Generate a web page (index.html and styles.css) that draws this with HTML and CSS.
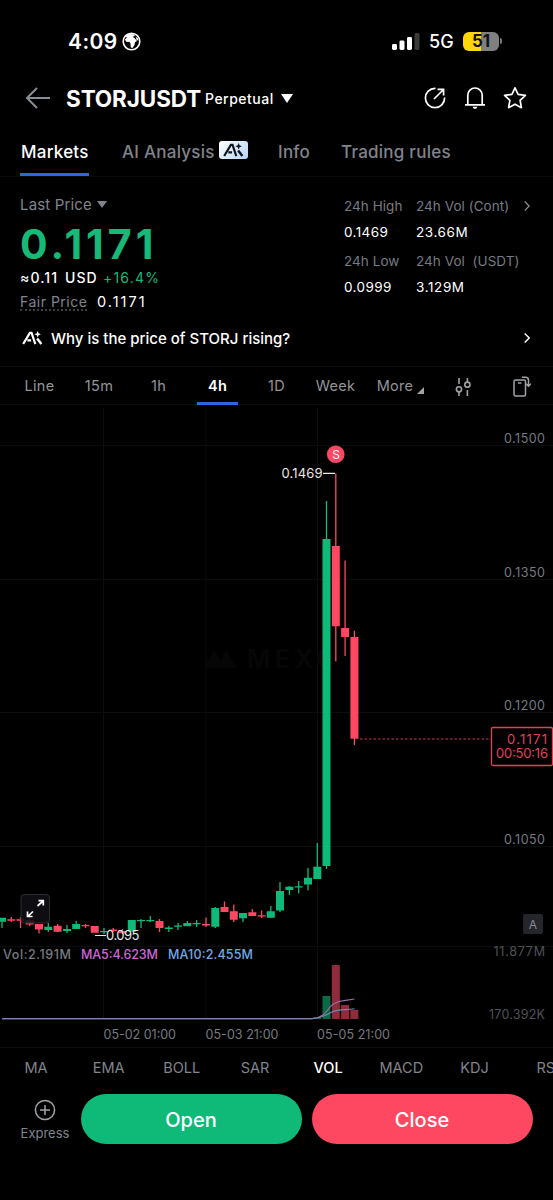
FILE: index.html
```html
<!DOCTYPE html>
<html lang="en">
<head>
    <meta charset="UTF-8">
    <meta name="viewport" content="width=device-width, initial-scale=1.0">
    <title>STORJUSDT Perpetual</title>
    <link rel="stylesheet" href="styles.css">
</head>
<body>
    <svg width="0" height="0" class="defs">
        <symbol id="ai" viewBox="0 0 22 15">
            <path d="M1 14L8.2 2H10L14 14M5.5 10H9.5" fill="none" stroke="currentColor" stroke-width="2.3"/>
            <path d="M16 8L20.5 14" fill="none" stroke="currentColor" stroke-width="2.6"/>
            <path d="M16.5 0L17.5 2.5L20 3.5L17.5 4.5L16.5 7L15.5 4.5L13 3.5L15.5 2.5Z" fill="currentColor"/>
        </symbol>
    </svg>

    <!-- Phone status bar -->
    <div class="status">
        <span class="time">4:09</span>
        <svg class="globe" width="19" height="19" viewBox="0 0 19 19">
            <circle cx="9.5" cy="9.5" r="8.3" fill="none" stroke="#fff" stroke-width="1.6"/>
            <path d="M3 4.5L7 2L12 2.2L13 4L10.5 4.8L12.5 6L15 9L13 10.2L12.5 13L10.5 16L8.8 15.5L8.5 11.5L7.5 10L4.2 9.8L2.8 7.5L5 5.5Z" fill="#fff"/>
            <path d="M13.5 4.5L16 6.5L16.5 9L14.5 7.5Z" fill="#fff"/>
        </svg>
        <svg class="signal" width="28" height="17" viewBox="0 0 28 17">
            <rect x="0" y="11" width="5" height="6" rx="1.4" fill="#fff"/>
            <rect x="7.5" y="7.5" width="5" height="9.5" rx="1.4" fill="#fff"/>
            <rect x="15" y="4" width="5" height="13" rx="1.4" fill="#fff"/>
            <rect x="22.5" y="0" width="5" height="17" rx="1.4" fill="#3a3a3a"/>
        </svg>
        <span class="network">5G</span>
        <div class="battery">51</div>
        <div class="battery-tip"></div>
    </div>

    <div class="header">
        <svg class="back" width="26" height="22" viewBox="0 0 26 22">
            <path d="M12 1L2 11L12 21M2 11H25" fill="none" stroke="#898d96" stroke-width="2"/>
        </svg>
        <h1>STORJUSDT</h1>
        <span class="perp">Perpetual</span>
        <svg class="down" width="12" height="9" viewBox="0 0 12 9"><path d="M0 0H12L6 9Z" fill="#fff"/></svg>
        <div class="actions">
            <svg width="24" height="24" viewBox="0 0 24 24" fill="none" stroke="#fff" stroke-width="1.7">
                <path d="M12.5 2.4H12A9.6 9.6 0 1 0 21.6 12V11.5"/>
                <path d="M11 13L20 4M14.5 3.4H20.6V9.5"/>
            </svg>
            <svg width="24" height="24" viewBox="0 0 24 24" fill="none" stroke="#fff" stroke-width="1.7">
                <path d="M4.8 18.5V9.2A7.2 7.2 0 0 1 19.2 9.2V18.5M2 18.8H22"/>
                <path d="M9.5 20.8H14.5L13.2 22.7H10.8Z" fill="#fff" stroke="none"/>
            </svg>
            <svg width="24" height="24" viewBox="0 0 24 24" fill="none" stroke="#fff" stroke-width="1.7" stroke-linejoin="round">
                <path d="M12 1.8L15.1 8.4L22.4 9.4L17.1 14.4L18.4 21.7L12 18.2L5.6 21.7L6.9 14.4L1.6 9.4L8.9 8.4Z"/>
            </svg>
        </div>
    </div>

    <div class="tabs">
        <span class="tab active">Markets</span>
        <span class="tab tab-ai">AI Analysis</span>
        <span class="ai-badge"><svg width="21" height="14"><use href="#ai"/></svg></span>
        <span class="tab tab-info">Info</span>
        <span class="tab tab-rules">Trading rules</span>
    </div>

    <div class="summary">
        <div class="price-box">
            <div class="last">Last Price <svg width="10" height="7" viewBox="0 0 10 7"><path d="M0 0H10L5 7Z" fill="#80848c"/></svg></div>
            <div class="price">0.1171</div>
            <div class="usd"><span class="approx">≈0.11 USD</span><span class="up">+16.4%</span></div>
            <div class="fair"><span class="fair-label">Fair Price</span><span class="fair-value">0.1171</span></div>
        </div>
        <div class="stats">
            <span class="label">24h High</span>
            <span class="label">24h Vol (Cont)</span>
            <svg width="6" height="10" viewBox="0 0 6 10"><path d="M.7 .5L5.2 5L.7 9.5" fill="none" stroke="#898d96" stroke-width="1.2"/></svg>
            <span>0.1469</span>
            <span class="vol">23.66M</span>
            <i></i>
            <span class="label">24h Low</span>
            <span class="label">24h Vol&nbsp; (USDT)</span>
            <i></i>
            <span>0.0999</span>
            <span class="vol">3.129M</span>
        </div>
    </div>

    <div class="why">
        <svg width="21" height="14"><use href="#ai"/></svg>
        <span>Why is the price of STORJ rising?</span>
        <svg class="arrow" width="6" height="10" viewBox="0 0 6 10"><path d="M.7 .5L5.2 5L.7 9.5" fill="none" stroke="#fff" stroke-width="1.4"/></svg>
    </div>

    <div class="frames">
        <span>Line</span>
        <span>15m</span>
        <span>1h</span>
        <span class="active">4h</span>
        <span>1D</span>
        <span>Week</span>
        <span class="more">More<svg width="7" height="7" viewBox="0 0 7 7"><path d="M7 0V7H0Z" fill="#a0a2a6"/></svg></span>
        <svg width="16" height="20" viewBox="0 0 16 20" fill="none" stroke="#a0a2a6" stroke-width="1.6">
            <circle cx="4" cy="12.3" r="2.6"/><path d="M4 1V7M4 15V19"/>
            <circle cx="12.4" cy="7.7" r="2.6"/><path d="M12.4 1V5M12.4 13V19"/>
        </svg>
        <svg width="18" height="21" viewBox="0 0 18 21" fill="none" stroke="#a0a2a6" stroke-width="1.5">
            <rect x="1" y="4" width="11.5" height="16" rx="1.5"/>
            <path d="M5 7H8.5M9 1.2H12.5Q15.5 1.2 15.5 4.2V10M13 7.8L15.5 10.3L18 7.8"/>
        </svg>
    </div>

    <!-- Candles and volume, one unit = one pixel of the screen -->
    <svg class="chart" width="553" height="642" viewBox="0 405 553 642">
        <path class="grid" d="M0 445.5H553M0 579.5H553M0 712.5H553M0 846.5H553M0 946.5H553M103.5 408V1019M206 408V1019M317.5 408V1019"/>

        <g class="watermark">
            <path d="M204 668L214 650L221 661L226 650L237 668Z"/>
            <text x="247" y="668" textLength="88">MEXC</text>
        </g>

        <!-- wicks -->
        <path class="wick green" d="M2 918V928M48.3 923V932M67 925V933M76.2 921V929M104 928V934M141 919V928M150.3 916V922M168.8 926V932M178 923V930M187.3 921V926M196.6 920V927M215.3 907V928M243 913V922M270.8 906V918M280 882V912M289.4 886V895M298.7 881V893.5M308 868V890.5M317.3 843V879M326.5 501V869"/>
        <path class="wick red" d="M11.3 917V922M20.5 917V928M29.7 919V926M39 924V933.5M57.6 924V932M85.5 924V928M94.7 926V932M113.2 928V932M122.5 929V934M159.5 919V932M206 917.5V927M224.5 901.5V912M233.8 904.5V922M252.3 909V916M261.6 910.5V918M335.8 473.5V661.5M345.1 560.5V656M354.4 630.7V745"/>
        <!-- bodies -->
        <path class="body green" d="M2 917.7V921.7M48.3 926.7V930M67 929V931M76.2 924V929M104 931V932.3M131.8 920V931.7M141 920V921.2M150.3 920V921.2M168.8 927.5V929M178 925.5V926.7M187.3 923V926.3M196.6 923V924.2M215.3 908V926.7M243 913V918.3M270.8 911.3V917.7M280 891V910.5M289.4 886.7V890M298.7 886.2V887.4M308 877.7V884.5M317.3 866.7V879M326.5 539V866"/>
        <path class="body red" d="M11.3 919.3V920.7M20.5 919.3V920.7M29.7 920.5V924.5M39 924V929.5M57.6 925.7V931.7M85.5 925V926.3M94.7 926V932.7M113.2 929.5V931M122.5 931V933.3M159.5 921V928M206 924V925.5M224.5 907V912M233.8 911.3V919.7M252.3 912.3V916M261.6 915.2V916.6M335.8 546V626.3M345.1 628V637M354.4 637V738.8"/>

        <!-- volume -->
        <path class="body vol-green" d="M317.3 1017.5V1019M326.5 996V1019"/>
        <path class="body vol-red" d="M335.8 965V1019M345.1 1005V1019M354.4 1010V1019"/>
        <path class="ma5" d="M2 1018.6H312C321 1018 325 1014 330 1007C336 1000 344 1001 354.5 999"/>
        <path class="ma10" d="M2 1018.6H312C324 1018 327 1014 333 1011.5C339 1009.5 346 1010 354.5 1008.7"/>

        <!-- current price -->
        <path class="price-line" d="M360 739H491"/>
        <rect class="price-tag" x="491.5" y="727.5" width="61" height="38" rx="1.5"/>
        <text class="tag-text" x="507" y="744" textLength="40">0.1171</text>
        <text class="tag-text" x="496" y="758.3" textLength="52">00:50:16</text>

        <g class="axis">
            <text x="504" y="443" textLength="41">0.1500</text>
            <text x="504" y="577" textLength="41">0.1350</text>
            <text x="504" y="710" textLength="41">0.1200</text>
            <text x="504" y="844" textLength="41">0.1050</text>
            <text x="103.5" y="1038.5" textLength="72.5">05-02 01:00</text>
            <text x="205.5" y="1038.5" textLength="73">05-03 21:00</text>
            <text x="317" y="1038.5" textLength="73">05-05 21:00</text>
            <text class="dim" x="493.5" y="956" textLength="51.5">11.877M</text>
            <text class="dim" x="489" y="1018.5" textLength="56">170.392K</text>
        </g>

        <circle cx="335.7" cy="454.3" r="8.8" fill="#fe4761"/>
        <text class="sell" x="336" y="458.5" text-anchor="middle">S</text>

        <text class="mark" x="281.5" y="478" textLength="41">0.1469</text>
        <path class="mark-line" d="M323 473.3H335M95 935.5H106"/>
        <text class="mark" x="106" y="940.3" textLength="33.5">0.095</text>

        <text class="legend" x="3" y="958.5" textLength="68" fill="#777a80">Vol:2.191M</text>
        <text class="legend" x="81" y="958.5" textLength="77" fill="#cf66d8">MA5:4.623M</text>
        <text class="legend" x="168" y="958.5" textLength="85" fill="#6fa8e8">MA10:2.455M</text>

        <rect x="21" y="894.5" width="28.5" height="28.5" rx="3.5" fill="#101115" fill-opacity=".85" stroke="#2b2c31"/>
        <path d="M37.5 906L43 901M38.5 900.7H43.3V905.5M33 911.5L27.7 916.5M27.5 911.5V916.5H32.5" fill="none" stroke="#fff" stroke-width="1.7"/>

        <rect x="523" y="914" width="20" height="20" rx="2" fill="#25262b"/>
        <text class="auto" x="533" y="928.8" text-anchor="middle">A</text>
    </svg>

    <div class="indicators">
        <span>MA</span>
        <span>EMA</span>
        <span>BOLL</span>
        <span>SAR</span>
        <span class="active">VOL</span>
        <span>MACD</span>
        <span>KDJ</span>
        <span>RSI</span>
    </div>

    <div class="footer">
        <div class="express">
            <svg width="22" height="22" viewBox="0 0 22 22" fill="none" stroke="#a0a2a6" stroke-width="1.5">
                <circle cx="11" cy="11" r="9.6"/><path d="M6 11H16M11 6V16"/>
            </svg>
            <span>Express</span>
        </div>
        <button class="btn open">Open</button>
        <button class="btn close">Close</button>
    </div>
</body>
</html>
```
FILE: styles.css
```css
* {
    box-sizing: border-box;
}
body {
    margin: 0;
    width: 553px;
    height: 1200px;
    overflow: hidden;
    background-color: #000;
    color: #fff;
    font-family: Inter, "Liberation Sans", sans-serif;
    font-size: 14px;
}
svg {
    display: block;
    flex-shrink: 0;
}
.defs {
    position: absolute;
}

/* Status bar */
.status {
    display: flex;
    align-items: center;
    height: 72px;
    padding: 10px 0 0 68px;
}
.time {
    width: 54px;
    font-size: 21px;
    font-weight: 600;
    letter-spacing: 0.4px;
}
.globe {
    margin-right: 251px;
}
.signal {
    margin-right: 9px;
}
.network {
    width: 34px;
    font-size: 18px;
    font-weight: 500;
}
.battery {
    width: 36px;
    height: 19px;
    border-radius: 6px;
    background: linear-gradient(to right, #ffd60a 51%, #808080 51%);
    color: #111;
    font-size: 17px;
    font-weight: 700;
    line-height: 19px;
    text-align: center;
}
.battery-tip {
    width: 2px;
    height: 6px;
    margin-left: 1px;
    border-radius: 0 2px 2px 0;
    background-color: #777;
}

/* Header */
.header {
    display: flex;
    align-items: center;
    height: 52px;
    padding: 0 26px 0 25px;
}
h1 {
    width: 139px;
    margin: 0 0 0 15px;
    font-size: 22.5px;
    font-weight: 700;
    letter-spacing: -0.1px;
}
.perp {
    width: 76px;
    font-size: 14px;
    font-weight: 500;
    letter-spacing: 0.5px;
}
.actions {
    display: flex;
    gap: 16px;
    margin-left: auto;
}

/* Page tabs */
.tabs {
    display: flex;
    align-items: center;
    height: 53px;
    padding: 0 20px;
    border-bottom: 1px solid #0a0a0c;
    color: #80848c;
    font-size: 17px;
    font-weight: 500;
    letter-spacing: 0.25px;
}
.tab {
    height: 52px;
    line-height: 56px;
    white-space: nowrap;
}
.tab.active {
    width: 69px;
    border-bottom: 3px solid #2f66e0;
    color: #fff;
    text-indent: 1px;
}
.tab-ai {
    width: 92px;
    margin: 0 5px 0 33px;
}
.ai-badge {
    display: flex;
    align-items: center;
    justify-content: center;
    width: 29px;
    height: 18px;
    border-radius: 3px;
    background: linear-gradient(135deg, #fff, #b5d3fa);
    color: #10131a;
}
.tab-info {
    width: 32px;
    margin: 0 31px 0 30px;
}

/* Price and 24h numbers */
.summary {
    display: flex;
    height: 141px;
    padding: 17px 20px 0;
    white-space: nowrap;
}
.price-box {
    width: 324px;
}
.last {
    display: flex;
    align-items: center;
    gap: 5px;
    height: 21px;
    color: #80848c;
    font-size: 15px;
    letter-spacing: 0.15px;
}
.price {
    height: 53px;
    line-height: 58px;
    color: #17b978;
    font-size: 41px;
    font-weight: 700;
    letter-spacing: 4px;
}
.usd {
    display: flex;
    height: 23px;
    line-height: 20px;
}
.approx {
    width: 83px;
    font-weight: 500;
    letter-spacing: 1.1px;
    word-spacing: 2px;
}
.up {
    color: #17b978;
    letter-spacing: 1.2px;
}
.fair {
    display: flex;
    height: 22px;
    line-height: 21px;
}
.fair-label {
    width: 67px;
    height: 20px;
    margin-right: 10px;
    border-bottom: 2px dotted #3c3e43;
    color: #80848c;
    letter-spacing: 0.5px;
}
.fair-value {
    font-size: 14.5px;
    letter-spacing: 2px;
}
.stats {
    display: grid;
    grid-template-columns: 72px 108px 8px;
    grid-template-rows: 24px 27px 32px 20px;
    align-items: center;
    height: 103px;
    font-size: 13.5px;
    letter-spacing: 0.4px;
}
.vol {
    letter-spacing: 0.6px;
}
.label {
    color: #777b83;
    letter-spacing: 0.05px;
}

/* AI question */
.why {
    display: flex;
    align-items: center;
    height: 48px;
    padding: 0 23px 8px 22px;
    font-size: 15px;
    font-weight: 500;
}
.why span {
    margin-left: 8px;
}
.arrow {
    margin-left: auto;
}

/* Timeframes */
.frames {
    display: grid;
    grid-template-columns: 59px 60px 59px 59px 59px 59px 71px 53px 66px;
    align-items: center;
    justify-items: center;
    height: 39px;
    padding-left: 10px;
    border-top: 1px solid #0c0c0e;
    border-bottom: 1px solid #0c0c0e;
    color: #93959a;
    font-size: 14.5px;
    letter-spacing: 0.3px;
}
.frames span {
    height: 39px;
    line-height: 38px;
}
.frames .active {
    width: 41px;
    height: 37px;
    border-bottom: 3px solid #2f66e0;
    color: #fff;
    font-weight: 600;
    line-height: 36px;
    text-align: center;
}
.frames .more {
    display: flex;
    align-items: center;
    gap: 4px;
    padding-bottom: 1px;
}
.more svg {
    margin-top: 9px;
}

/* Chart */
.grid {
    fill: none;
    stroke: #0c0d0e;
}
.watermark {
    fill: #060606;
    font-size: 25px;
    font-weight: 700;
}
.green {
    stroke: #0fb978;
}
.red {
    stroke: #fe4761;
}
.wick {
    stroke-width: 1.3;
}
.body {
    stroke-width: 8;
}
.vol-green {
    stroke: #0a6a47;
}
.vol-red {
    stroke: #8f2b3b;
}
.ma5,
.ma10 {
    fill: none;
    stroke: #9c6fa3;
    stroke-width: 1.1;
}
.ma10 {
    stroke: #7b83b5;
}
.price-line {
    stroke: #c93a50;
    stroke-width: 1.2;
    stroke-dasharray: 2.5 2;
}
.price-tag {
    fill: #000;
    stroke: #e0425a;
    stroke-width: 1.3;
}
.tag-text {
    fill: #e0425a;
    font-size: 13px;
}
.axis {
    fill: #777a80;
    font-size: 12.5px;
}
.dim {
    fill: #505257;
}
.sell {
    fill: #fff;
    font-size: 12px;
}
.mark {
    fill: #e8e8e8;
    font-size: 13px;
}
.mark-line {
    stroke: #e8e8e8;
    stroke-width: 1.2;
}
.legend {
    font-size: 12.5px;
    font-weight: 500;
}
.auto {
    fill: #8a8c92;
    font-size: 12px;
}

/* Indicators */
.indicators {
    display: grid;
    grid-template-columns: 72px repeat(7, 73.2px);
    align-items: center;
    justify-items: center;
    width: 553px;
    height: 41px;
    padding-bottom: 2px;
    border-top: 1px solid #0c0c0e;
    color: #80848c;
    font-size: 14.5px;
}
.indicators .active {
    color: #fff;
    font-weight: 500;
}

/* Bottom bar */
.footer {
    display: flex;
    gap: 10px;
    padding: 6px 20px 0;
}
.express {
    display: flex;
    flex-direction: column;
    align-items: center;
    gap: 4px;
    width: 50px;
    padding-top: 5px;
    color: #80848c;
    font-size: 13px;
}
.btn {
    width: 221px;
    height: 50px;
    padding: 2px 0 0;
    border: none;
    border-radius: 25px;
    color: #fff;
    font-family: inherit;
    font-size: 20px;
    font-weight: 500;
}
.open {
    margin-left: 0.5px;
    background-color: #0fb978;
}
.close {
    background-color: #fe4761;
}
```
